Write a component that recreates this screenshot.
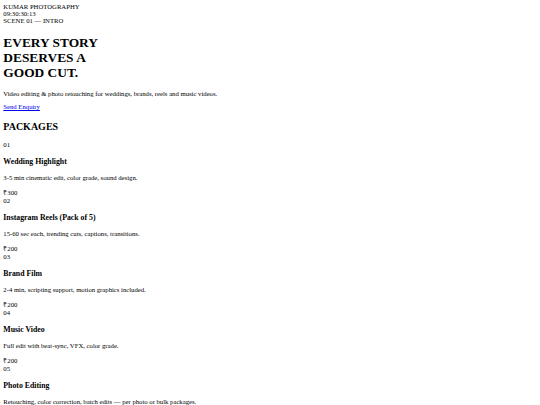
import React from 'react';

const packages = [
  { no: '01', title: 'Wedding Highlight', desc: '3-5 min cinematic edit, color grade, sound design.', price: '₹300' },
  { no: '02', title: 'Instagram Reels (Pack of 5)', desc: '15-60 sec each, trending cuts, captions, transitions.', price: '₹200' },
  { no: '03', title: 'Brand Film', desc: '2-4 min, scripting support, motion graphics included.', price: '₹200' },
  { no: '04', title: 'Music Video', desc: 'Full edit with beat-sync, VFX, color grade.', price: '₹200' },
  { no: '05', title: 'Photo Editing', desc: 'Retouching, color correction, batch edits — per photo or bulk packages.', price: '₹150' },
];

export default function App() {
  return (
    <div className="m-[3.32px] text-[6.7px] leading-[normal] text-black font-['Liberation_Serif','Times_New_Roman',serif]">
      {/* Header strip */}
      <div>KUMAR PHOTOGRAPHY</div>
      <div>09:30:30:13</div>
      <div>SCENE 01 — INTRO</div>

      {/* Hero */}
      <h1 className="text-[13.4px] leading-[15px] font-bold mt-[10.9px] mb-[9.5px]">
        EVERY STORY
        <br />
        DESERVES A
        <br />
        GOOD CUT.
      </h1>
      <p className="my-[6.64px]">Video editing &amp; photo retouching for weddings, brands, reels and music videos.</p>
      <p className="my-[6.64px]">
        <a href="#" className="text-[#0000ee] underline">Send Enquiry</a>
      </p>

      {/* Packages */}
      <h2 className="text-[10px] leading-[normal] font-bold mt-[10.3px] mb-[9.3px]">PACKAGES</h2>
      {packages.map((pkg) => (
        <div key={pkg.no}>
          <div>{pkg.no}</div>
          <h3 className="text-[7.8px] leading-[normal] font-bold mt-[9px] mb-[7.77px]">{pkg.title}</h3>
          <p className="mt-[7.77px] mb-[7.2px]">{pkg.desc}</p>
          <div>{pkg.price}</div>
        </div>
      ))}
    </div>
  );
}
